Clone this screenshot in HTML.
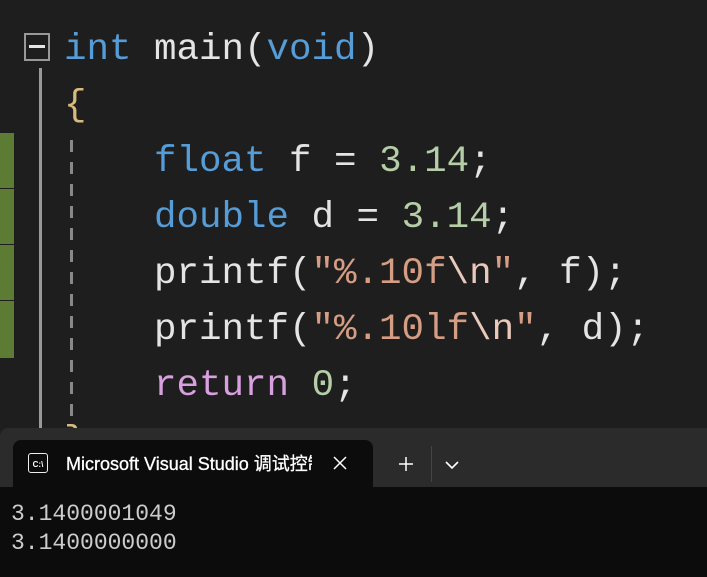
<!DOCTYPE html><html><head><style>
body{margin:0;width:707px;height:577px;background:#1e1e1e;overflow:hidden;position:relative;font-family:"Liberation Mono",monospace}
.code{position:absolute;left:64px;top:22px;font-family:"Liberation Mono",monospace;font-size:37.5px;line-height:56px;color:#e4e4e4;white-space:pre}
.k{color:#569cd6}.n{color:#b5cea8}.s{color:#d69d85}.e{color:#e8c9bb}.r{color:#d8a0df}.b{color:#d7ba7d}
.gb{position:absolute;left:0;width:14px;background:#5b7c32}
</style></head><body>
<div class="gb" style="top:133px;height:55px"></div>
<div class="gb" style="top:189px;height:55px"></div>
<div class="gb" style="top:245px;height:55px"></div>
<div class="gb" style="top:301px;height:57px"></div>
<div style="position:absolute;left:24px;top:33px;width:26px;height:28px;border:2px solid #999;box-sizing:border-box"></div>
<div style="position:absolute;left:29px;top:45px;width:16px;height:3px;background:#e6e6e6"></div>
<div style="position:absolute;left:39px;top:68px;width:3px;height:370px;background:#999"></div>
<div style="position:absolute;left:70px;top:140px;width:3px;height:280px;background:repeating-linear-gradient(#888 0 12px,transparent 12px 22px)"></div>
<div class="code"><span class="k">int</span> main(<span class="k">void</span>)
<span class="b">{</span>
    <span class="k">float</span> f = <span class="n">3.14</span>;
    <span class="k">double</span> d = <span class="n">3.14</span>;
    printf(<span class="s">"%.10f</span><span class="e">\n</span><span class="s">"</span>, f);
    printf(<span class="s">"%.10lf</span><span class="e">\n</span><span class="s">"</span>, d);
    <span class="r">return</span> <span class="n">0</span>;
<span class="b">}</span></div>
<div style="position:absolute;left:0;top:428px;width:707px;height:149px;background:#2b2b2b;border-radius:8px 0 0 0"></div>
<div style="position:absolute;left:0;top:487px;width:707px;height:90px;background:#0c0c0c"></div>
<div style="position:absolute;left:13px;top:440px;width:360px;height:48px;background:#0c0c0c;border-radius:8px 8px 0 0"></div>
<div style="position:absolute;left:28px;top:453px;width:20px;height:20px;border:1.5px solid #eee;border-radius:3px;box-sizing:border-box;color:#fff;font:bold 8px 'Liberation Sans',sans-serif;line-height:22px;text-align:center">C:\</div>
<div style="position:absolute;left:66px;top:452px;width:246px;overflow:hidden;white-space:nowrap;color:#fff;font:18px 'Liberation Sans','Noto Sans CJK SC',sans-serif;line-height:24px;-webkit-text-stroke:0.3px #fff">Microsoft Visual Studio 调试控制台</div>
<svg style="position:absolute;left:333px;top:456px" width="14" height="14"><path d="M1 1 L13 13 M13 1 L1 13" stroke="#fff" stroke-width="1.5"/></svg>
<svg style="position:absolute;left:398px;top:456px" width="16" height="16"><path d="M8 1 V15 M1 8 H15" stroke="#fff" stroke-width="1.5"/></svg>
<div style="position:absolute;left:431px;top:446px;width:1px;height:36px;background:#444"></div>
<svg style="position:absolute;left:445px;top:460px" width="14" height="10"><path d="M1 2 L7 8 L13 2" stroke="#fff" stroke-width="1.6" fill="none"/></svg>
<div style="position:absolute;left:11px;top:500px;color:#cccccc;font:23px 'Liberation Mono',monospace;line-height:29px;white-space:pre">3.1400001049
3.1400000000</div>
</body></html>
